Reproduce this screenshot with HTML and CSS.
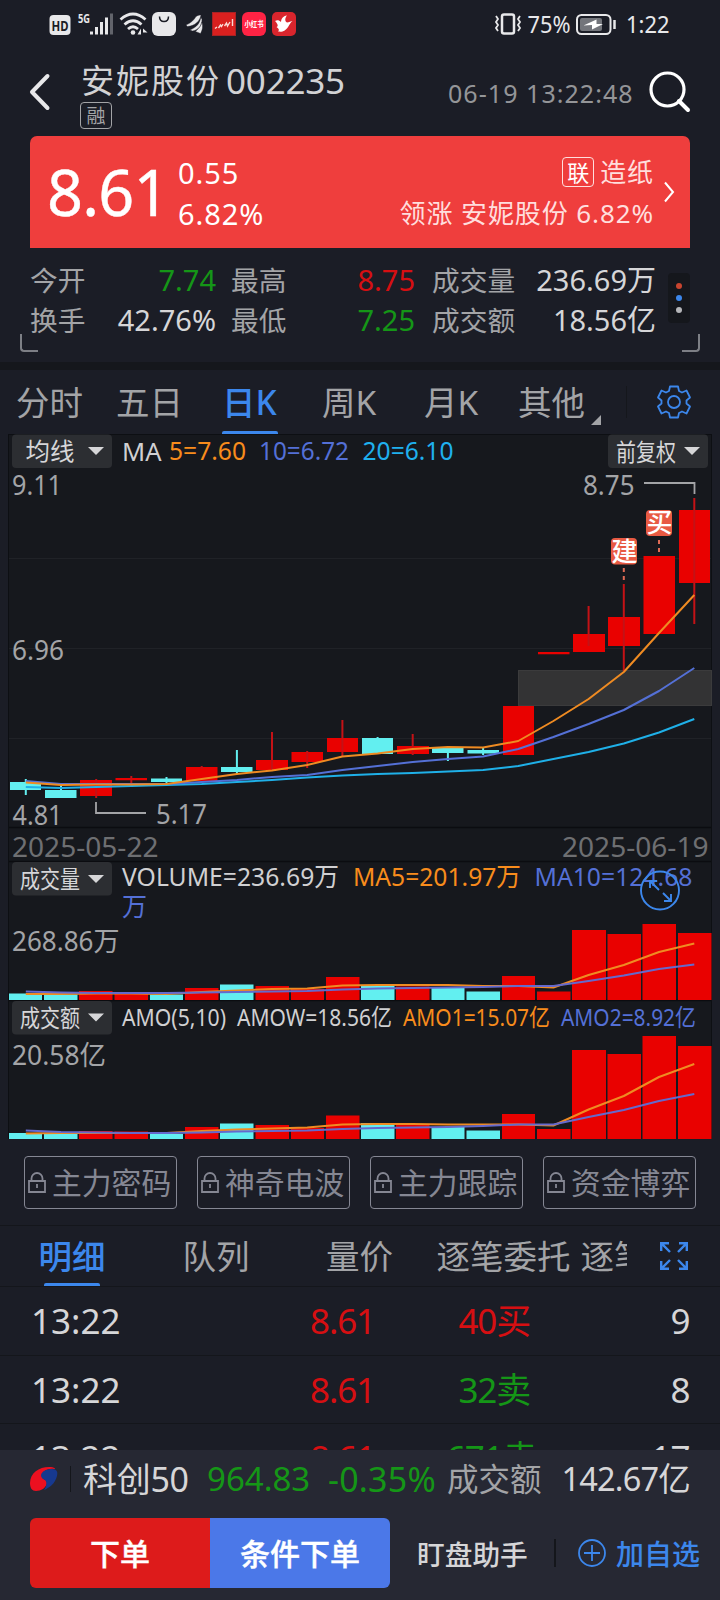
FILE: index.html
```html
<!DOCTYPE html>
<html lang="zh-CN">
<head>
<meta charset="utf-8">
<title>安妮股份 002235</title>
<link rel="stylesheet" href="styles.css">
</head>
<body>
<div class="screen">
  <header class="status">
    <svg class="status-icons" width="250" height="28" viewBox="48 10 250 28">
      <rect x="49.500" y="15" width="21" height="20" rx="4" fill="#e8e8ea"/>
      <text x="51.500" y="30.500" font-size="14" font-weight="700" fill="#1b1d26" textLength="17" lengthAdjust="spacingAndGlyphs">HD</text>
      <text x="78" y="22.500" font-size="13" font-weight="700" fill="#e8e8ea" textLength="12" lengthAdjust="spacingAndGlyphs">5G</text>
      <path d="M91.500 31.500v3M96.500 27v7.500M101.500 22v12.500M106.500 17.500v17" stroke="#e8e8ea" stroke-width="3"/>
      <path d="M111.500 13.500v21" stroke="#62646b" stroke-width="3"/>
      <g fill="none" stroke="#e8e8ea" stroke-width="2.800">
        <path d="M120.500 19.500q12.500-11 25 0M124.500 24.500q8.500-7.500 17 0M128 29q5-4.500 10 0"/>
      </g>
      <circle cx="133" cy="32.500" r="2.300" fill="#e8e8ea"/>
      <path d="M141 28.500v6h-3.500zM143 28.500l4.500 4h-4.500z" fill="#e8e8ea"/>
      <rect x="152" y="12" width="24" height="24" rx="6" fill="#e8e8ea"/>
      <path d="M159.500 16.500q0 5 4.500 5t4.500-5" fill="none" stroke="#1b1d26" stroke-width="1.500"/>
      <path d="M186 25C191 23 194 20 196 16.500 198 15 200 15 201 15 200 21 195 26 187.500 26.500ZM190 30C197 27 200 23 200.800 17L202 19.500C202 25 199 30 192.500 31ZM195.500 31.500C199 28 201 26 201.800 22 203.500 27 202 31 200.500 33.500Z" fill="#e8e8ea" stroke="#1b1d26" stroke-width=".4"/>
      <rect x="212.500" y="12.500" width="23" height="23" fill="#d9201f" stroke="#a82224"/>
      <path d="M215 28.500l2-1.500M218.500 28l2-3 1 1.500 1.500-2.500M224.500 26l2-3 1 3 2.500-4M232.500 19v7" fill="none" stroke="#fbd9d5" stroke-width="1.400"/>
      <rect x="242" y="12" width="24" height="24" rx="6" fill="#fe2344"/>
      <text x="244.500" y="27" font-size="7.500" font-weight="700" fill="#fff" textLength="19" lengthAdjust="spacingAndGlyphs">小红书</text>
      <rect x="272" y="12" width="24" height="24" rx="5" fill="#d9252d"/>
      <path d="M275 21C277 20 279 20 281 22 281 19 283 16 287 15.500 284.500 18.500 285 21.500 287 22.500 289 22.500 291 21 292.500 21 289 23.500 288 30 282.500 31.500 280 32 279 31.500 278 31.500 279.500 30 279 28.500 276.500 27 278.500 26.500 278 24 275 21Z" fill="#fff"/>
    </svg>
    <svg class="status-right" width="180" height="28" viewBox="490 10 180 28">
      <rect x="502" y="14.500" width="12" height="19" rx="2" fill="none" stroke="#e8e8ea" stroke-width="2.500"/>
      <path d="M496 16l2 3-2 3 2 3-2 3 2 3M520 16l-2 3 2 3-2 3 2 3-2 3" fill="none" stroke="#e8e8ea" stroke-width="1.800"/>
      <text x="527.500" y="33" font-size="23" fill="#e8e8ea" textLength="43" lengthAdjust="spacingAndGlyphs">75%</text>
      <rect x="577" y="15" width="33.500" height="19" rx="4.500" fill="none" stroke="#e8e8ea" stroke-width="2"/>
      <rect x="580" y="18" width="22" height="13" rx="2" fill="#73757b"/>
      <path d="M583.500 25.500l13-6v4.500h6.500l-11 5.500v-4.500z" fill="#fff"/>
      <path d="M614.500 20v9" stroke="#e8e8ea" stroke-width="2.500"/>
      <text x="626" y="33" font-size="23" fill="#e8e8ea" textLength="43.500" lengthAdjust="spacingAndGlyphs">1:22</text>
    </svg>
  </header>

  <section class="title-bar">
    <svg class="back" width="22" height="38" viewBox="0 0 22 38"><path d="M18.500 3L3 19l15.500 16" fill="none" stroke="#e8e8ea" stroke-width="4" stroke-linecap="round" stroke-linejoin="round"/></svg>
    <div class="title-block">
      <div class="title"><span class="stock-name">安妮股份</span><span class="stock-code">002235</span></div>
      <span class="tag">融</span>
    </div>
    <span class="time">06-19 13:22:48</span>
    <svg class="search" width="42" height="42" viewBox="0 0 42 42" fill="none" stroke="#fff"><circle cx="18.500" cy="18.500" r="16.500" stroke-width="3.200"/><path d="M30 30l9 9" stroke-width="4" stroke-linecap="round"/></svg>
  </section>

  <section class="price-card">
    <span class="price">8.61</span>
    <div class="change"><span>0.55</span><span>6.82%</span></div>
    <div class="sector">
      <div class="sector-name"><span class="link-tag">联</span><span>造纸</span></div>
      <div>领涨 安妮股份 6.82%</div>
    </div>
    <svg width="12" height="22" viewBox="0 0 12 22"><path d="M2 1.500L10 11 2 20.500" fill="none" stroke="#fff" stroke-width="2"/></svg>
  </section>

  <section class="quote">
    <div class="quote-grid">
      <span class="k">今开</span><span class="v down">7.74</span><span class="k">最高</span><span class="v up">8.75</span><span class="k">成交量</span><span class="v">236.69万</span>
      <span class="k">换手</span><span class="v">42.76%</span><span class="k">最低</span><span class="v down">7.25</span><span class="k">成交额</span><span class="v">18.56亿</span>
    </div>
    <div class="more"><i class="dot red"></i><i class="dot blue"></i><i class="dot gray"></i></div>
    <i class="corner left"></i><i class="corner right"></i>
  </section>

  <nav class="periods">
    <span class="p1">分时</span><span class="p2">五日</span><span class="p3 active">日K</span><span class="p4">周K</span><span class="p5">月K</span><span class="p6 more-periods">其他</span>
    <svg class="gear" width="36" height="36" viewBox="-18 -18 36 36" fill="none" stroke="#3c87ec" stroke-width="1.800" stroke-linejoin="round">
      <path d="M-4-15.500H4L5-11 8-9.500 12.500-11.500 16-4.500 12.500-1.500V1.500L16 4.500 12.500 11.500 8 9.500 5 11 4 15.500H-4L-5 11-8 9.500-12.500 11.500-16 4.500-12.500 1.500V-1.500L-16-4.500-12.500-11.500-8-9.500-5-11Z"/><circle r="6"/>
    </svg>
  </nav>

  <svg class="chart" width="720" height="705" viewBox="0 434 720 705">
    <rect x="8.500" y="434.500" width="703" height="705" fill="#16181d" stroke="#0d0f13"/>
    <path d="M9 558.500H711M9 648.500H711M9 738.500H711" stroke="#202227"/>
    <path d="M9 827.500H711M9 861.500H711M9 1000.500H711" stroke="#0b0c10" stroke-width="1.500"/>
    <rect x="518.500" y="670.500" width="193" height="35" fill="#333334" stroke="#3b3b3c"/>

    <!-- chips -->
    <g fill="#2c2e32"><rect x="12" y="434.500" width="100" height="33.500" rx="4"/><rect x="608" y="434.500" width="100" height="33.500" rx="4"/><rect x="12" y="862" width="100" height="33.500" rx="4"/><rect x="12" y="1001" width="100" height="33.500" rx="4"/></g>
    <path d="M88 447h16l-8 8zM684 447h16l-8 8zM88 875h16l-8 8zM88 1013.500h16l-8 8z" fill="#d6d6d8"/>
    <g class="cn" font-size="24" fill="#d6d6d8">
      <text x="25.500" y="460" textLength="49" lengthAdjust="spacingAndGlyphs">均线</text>
      <text x="616" y="461" textLength="60" lengthAdjust="spacingAndGlyphs">前复权</text>
      <text x="20" y="888" textLength="60" lengthAdjust="spacingAndGlyphs">成交量</text>
      <text x="20" y="1027" textLength="60" lengthAdjust="spacingAndGlyphs">成交额</text>
    </g>

    <!-- legends -->
    <g font-size="26">
      <text x="122" y="460.500" fill="#d0d0d2" textLength="39.500" lengthAdjust="spacingAndGlyphs">MA</text>
      <text x="169" y="460" fill="#f88c1c" textLength="77" lengthAdjust="spacingAndGlyphs">5=7.60</text>
      <text x="259" y="460" fill="#5470d6" textLength="90" lengthAdjust="spacingAndGlyphs">10=6.72</text>
      <text x="362.500" y="460" fill="#1fb0ee" textLength="91" lengthAdjust="spacingAndGlyphs">20=6.10</text>
      <text x="122" y="886" fill="#d0d0d2" textLength="217" lengthAdjust="spacingAndGlyphs">VOLUME=236.69万</text>
      <text x="353" y="886" fill="#f88c1c" textLength="168" lengthAdjust="spacingAndGlyphs">MA5=201.97万</text>
      <text x="534.500" y="886" fill="#5470d6" textLength="158" lengthAdjust="spacingAndGlyphs">MA10=124.68</text>
      <text x="122" y="915.500" fill="#5470d6" textLength="25" lengthAdjust="spacingAndGlyphs">万</text>
    </g>
    <g font-size="23.500">
      <text x="122" y="1026" fill="#d0d0d2" textLength="104" lengthAdjust="spacingAndGlyphs">AMO(5,10)</text>
      <text x="237" y="1026" fill="#d0d0d2" textLength="155" lengthAdjust="spacingAndGlyphs">AMOW=18.56亿</text>
      <text x="403" y="1026" fill="#f88c1c" textLength="147" lengthAdjust="spacingAndGlyphs">AMO1=15.07亿</text>
      <text x="561" y="1026" fill="#5470d6" textLength="135" lengthAdjust="spacingAndGlyphs">AMO2=8.92亿</text>
    </g>

    <!-- axis labels -->
    <g font-size="27" fill="#a3a4a7">
      <text x="12" y="494.500" textLength="50" lengthAdjust="spacingAndGlyphs">9.11</text>
      <text x="583" y="494.500" textLength="51.500" lengthAdjust="spacingAndGlyphs">8.75</text>
      <text x="12" y="660" textLength="52" lengthAdjust="spacingAndGlyphs">6.96</text>
      <text x="12.500" y="824.500" textLength="50" lengthAdjust="spacingAndGlyphs">4.81</text>
      <text x="156" y="824" textLength="51" lengthAdjust="spacingAndGlyphs">5.17</text>
      <text x="12" y="951" textLength="107.500" lengthAdjust="spacingAndGlyphs">268.86万</text>
      <text x="12" y="1065" textLength="94" lengthAdjust="spacingAndGlyphs">20.58亿</text>
      <g fill="#6e6f72"><text x="12" y="857" textLength="146.500" lengthAdjust="spacingAndGlyphs">2025-05-22</text>
      <text x="562" y="857" textLength="146.500" lengthAdjust="spacingAndGlyphs">2025-06-19</text></g>
    </g>
    <path d="M644 483H694.500V494M96 802V813H146" fill="none" stroke="#a3a4a7" stroke-width="1.800"/>

    <!-- candles -->
    <path d="M10 782h31v8h-31zM45 790h31.500v8h-31.500zM151 778.500h31v3.500h-31zM221 767h31.500v5h-31.500zM362 738h31v16h-31zM432 748h31.500v5h-31.500zM467.500 750h31.500v3.500h-31.500z" fill="#62eff0"/>
    <path d="M25.800 779v16M61 785v6M166.500 777v6M236.900 750v24M377.600 737v2M447.900 746v15M483.100 748v7" stroke="#62eff0" stroke-width="2"/>
    <path d="M80 780h32v16h-32zM115.500 778h31.500v2.300h-31.500zM186 767h31.500v14h-31.500zM256 760h32v10h-32zM291.500 752h31.500v10h-31.500zM327 738h31v14h-31zM397 746h32v8h-32zM503 706h31v49h-31zM538 652h31.500v2.200h-31.500zM573 634h32v18h-32zM608 617h32v29h-32zM643.500 556h31.500v78h-31.500zM679 510h31v73h-31z" fill="#e90100"/>
    <path d="M96.200 779v19M131.300 776v7M201.700 766v3M272 732v38M307.200 751v17M342.400 720v37M412.700 734v21M588.600 606v40M623.800 584v87M694.300 498v126" stroke="#c41216" stroke-width="2"/>
    <g fill="none" stroke-width="2" stroke-linejoin="round">
      <polyline stroke="#1fb0e8" points="25.800,787 61,788 96.200,787 131.300,786 166.500,785 201.700,784 236.900,782 272,780 307.200,777.500 342.400,775.500 377.600,774 412.700,773 447.900,771.500 483.100,770 518.300,766 553.400,759 588.600,752 623.800,743.500 659,732.500 694.300,719"/>
      <polyline stroke="#5470d6" points="25.800,781 61,784 96.200,784 131.300,784 166.500,784 201.700,782 236.900,780 272,777 307.200,775 342.400,770 377.600,766 412.700,762 447.900,759 483.100,756.500 518.300,749 553.400,737 588.600,724 623.800,710 659,691 694.300,668"/>
      <polyline stroke="#ef8b22" points="25.800,782.500 61,785 96.200,784.500 131.300,784.500 166.500,784 201.700,779 236.900,774 272,770.500 307.200,765 342.400,756.500 377.600,753.500 412.700,749 447.900,747 483.100,747.500 518.300,741 553.400,721 588.600,699 623.800,672 659,633 694.300,595"/>
    </g>
    <path d="M623.800 568v15M659 540v14" stroke="#df6b55" stroke-width="2" stroke-dasharray="4 4"/>
    <rect x="611" y="538" width="26" height="26.500" rx="4" fill="#e85a43"/><rect x="646" y="510" width="26" height="26" rx="4" fill="#e85a43"/>
    <g class="cn" font-size="26" font-weight="500" fill="#fff"><text x="611.500" y="561">建</text><text x="646.500" y="532">买</text></g>

    <!-- volume and amount -->
    <path d="M9 993.500h33v6.500h-33zM44 994.500h33.500v5.500h-33.500zM150 994.500h33v5.500h-33zM220 984.500h33.500v15.500h-33.500zM361 986h33.500v14h-33.500zM431.500 988h33v12h-33zM466.500 991.500h33.500v8.500h-33.500zM9 1133h33v6h-33zM44 1134h33.500v5h-33.500zM150 1134h33v5h-33zM220 1123.500h33.500v15.500h-33.500zM361 1123h33.500v16h-33.500zM431.500 1127h33v12h-33zM466.500 1130.500h33.500v8.500h-33.500z" fill="#62eff0"/>
    <path d="M79 991h33.500v9h-33.500zM114.500 992.500h33.500v7.500h-33.500zM185 988h33.500v12h-33.500zM255.500 986h33.500v14h-33.500zM291 989h33v11h-33zM326 977h33.500v23h-33.500zM396 986.500h33.500v13.500h-33.500zM502 976h33v24h-33zM537 991.500h33.500v8.500h-33.500zM572 930h34v70h-34zM607.500 934h33.500v66h-33.500zM642.500 924h33.500v76h-33.500zM678 933h33.500v67h-33.500zM79 1131h33.500v8h-33.500zM114.500 1131.500h33.500v7.500h-33.500zM185 1127h33.500v12h-33.500zM255.500 1125h33.500v14h-33.500zM291 1128h33v11h-33zM326 1115.500h33.500v23.500h-33.500zM396 1124.500h33.500v14.500h-33.500zM502 1114h33v25h-33zM537 1129h33.500v10h-33.500zM572 1050h34v89h-34zM607.500 1054h33.500v85h-33.500zM642.500 1036h33.500v103h-33.500zM678 1046h33.500v93h-33.500z" fill="#e90100"/>
    <g fill="none" stroke-width="2" stroke-linejoin="round">
      <g stroke="#ef8b22">
        <polyline points="25.800,994 61,994 96.200,993.500 131.300,993.500 166.500,994 201.700,992 236.900,990.500 272,989 307.200,988.500 342.400,985.500 377.600,985 412.700,985 447.900,985 483.100,986 518.300,986 553.400,987.500 588.600,975 623.800,965 659,952 694.300,943.500"/>
        <polyline points="25.800,1133.500 61,1133 96.200,1133 131.300,1133 166.500,1133 201.700,1131 236.900,1129.500 272,1128.500 307.200,1127.500 342.400,1124.500 377.600,1124 412.700,1124 447.900,1124.500 483.100,1124.500 518.300,1124.500 553.400,1125.500 588.600,1109.500 623.800,1096 659,1077 694.300,1064"/>
      </g>
      <g stroke="#6569cc">
        <polyline points="25.800,991.500 61,992.500 96.200,993 131.300,993 166.500,993 201.700,992.500 236.900,992 272,991.500 307.200,991 342.400,989.500 377.600,988.500 412.700,988 447.900,987.500 483.100,987 518.300,986 553.400,986 588.600,981 623.800,975.500 659,969 694.300,964.500"/>
        <polyline points="25.800,1130.500 61,1132 96.200,1132.500 131.300,1133 166.500,1133 201.700,1132.500 236.900,1131.500 272,1131 307.200,1130.500 342.400,1129 377.600,1128 412.700,1127.500 447.900,1127 483.100,1126 518.300,1124.500 553.400,1124.500 588.600,1117 623.800,1110 659,1101 694.300,1094"/>
      </g>
    </g>
    <g fill="none" stroke="#3c87ec" stroke-width="1.900"><circle cx="660" cy="890.500" r="19"/><path d="M650 888v-7h7M650 881l9 9M663 893l8 8M671 894v7h-7"/></g>
  </svg>

  <section class="features">
    <a class="feature"><svg width="18" height="22" viewBox="0 0 18 22"><path d="M3.500 10V6.500a5.500 5.500 0 0 1 11 0V10M1 9h16v11H1z"/><path d="M9 12v4"/></svg><span>主力密码</span></a>
    <a class="feature"><svg width="18" height="22" viewBox="0 0 18 22"><path d="M3.500 10V6.500a5.500 5.500 0 0 1 11 0V10M1 9h16v11H1z"/><path d="M9 12v4"/></svg><span>神奇电波</span></a>
    <a class="feature"><svg width="18" height="22" viewBox="0 0 18 22"><path d="M3.500 10V6.500a5.500 5.500 0 0 1 11 0V10M1 9h16v11H1z"/><path d="M9 12v4"/></svg><span>主力跟踪</span></a>
    <a class="feature"><svg width="18" height="22" viewBox="0 0 18 22"><path d="M3.500 10V6.500a5.500 5.500 0 0 1 11 0V10M1 9h16v11H1z"/><path d="M9 12v4"/></svg><span>资金博弈</span></a>
  </section>

  <nav class="detail-tabs">
    <div class="tab-strip"><span class="d1 active">明细</span><span class="d2">队列</span><span class="d3">量价</span><span class="d4">逐笔委托</span><span class="d5">逐笔</span></div>
    <svg class="expand" width="28" height="28" viewBox="0 0 28 28" fill="none" stroke="#3c87ec" stroke-width="2.400"><path d="M1.200 9V1.200H9M1.200 1.200L10 10M19 1.200h7.800V9M26.800 1.200L18 10M1.200 19v7.800H9M1.200 26.800L10 18M19 26.800h7.800V19M26.800 26.800L18 18"/></svg>
  </nav>

  <section class="trades">
    <div class="trade"><span class="t-time">13:22</span><span class="t-price up">8.61</span><span class="t-vol up">40买</span><span class="t-count">9</span></div>
    <div class="trade"><span class="t-time">13:22</span><span class="t-price up">8.61</span><span class="t-vol down">32卖</span><span class="t-count">8</span></div>
    <div class="trade"><span class="t-time">13:22</span><span class="t-price up">8.61</span><span class="t-vol down">671卖</span><span class="t-count">17</span></div>
  </section>

  <footer class="bottom">
    <div class="index-row">
      <svg width="28" height="26" viewBox="0 0 28 26"><path d="M0 17C0 7 9 1 19 1 25 1 26 3 24 3 17 2 11 6 12 11 13 14 17 13 17 17 16 22 11 25 6 25 2 25 0 22 0 17Z" fill="#ec1020"/><path d="M11 9C12 5 17 3 22 3 27 3 28 6 27 10 25 18 19 22 14 24 17 20 17 16 15 14 13 13 11 12 11 9Z" fill="#17398f"/></svg>
      <i class="rule"></i>
      <span class="ix-name">科创50</span><span class="ix-value down">964.83</span><span class="ix-pct down">-0.35%</span><span class="ix-label">成交额</span><span class="ix-amount">142.67亿</span>
    </div>
    <div class="actions">
      <a class="order">下单</a><a class="cond">条件下单</a><a class="helper">盯盘助手</a><i class="rule"></i>
      <a class="fav"><svg width="28" height="28" viewBox="0 0 28 28" fill="none" stroke="#3c87ec" stroke-width="1.800"><circle cx="14" cy="14" r="13"/><path d="M14 6v16M6 14h16"/></svg><span>加自选</span></a>
    </div>
  </footer>
</div>
</body>
</html>
```
FILE: styles.css
```css
* { box-sizing: border-box; }
body {
  margin: 0;
  background: #1b1d26;
  font-family: "Noto Sans", "Noto Sans CJK SC", sans-serif;
  color: #d6d6d8;
}
.screen {
  width: 720px;
  height: 1600px;
  display: flex;
  flex-direction: column;
  overflow: hidden;
  background: #1b1d26;
}
.screen svg { display: block; flex: none; }
span, a { white-space: nowrap; }
i { display: block; }
.cn { font-family: "Noto Sans CJK SC", sans-serif; }
.up { color: #d60f12; }
.v.down, .t-vol.down, .ix-value, .ix-pct { color: #159617; }

.status { height: 52px; padding: 10px 50px 0 48px; display: flex; justify-content: space-between; }

.title-bar { height: 84px; flex: none; display: flex; padding: 0 30px; }
.back { margin: 21px 0 0 -1px; }
.title-block { margin-left: 29px; width: 300px; }
.title { height: 50px; line-height: 57px; display: flex; gap: 5px; margin-left: 1px; color: #d2d2d4; }
.stock-name { font-size: 33px; letter-spacing: 2px; }
.stock-code { font-size: 35px; letter-spacing: -0.2px; }
.tag {
  display: block; width: 32px; height: 27px; border: 1px solid #a3a4a7; border-radius: 4px;
  font-size: 19px; line-height: 26px; text-align: center; color: #a3a4a7;
}
.time { margin-left: 68px; font-size: 25px; line-height: 83px; letter-spacing: 1.05px; color: #949598; }
.search { margin: 19px -1px 0 auto; }

.price-card {
  height: 112px; flex: none; margin: 0 30px; padding: 0 15px 0 17px;
  border-radius: 7px 7px 0 0; background: #ef3e3d; color: #fff; display: flex; align-items: center;
}
.price { font-size: 63px; line-height: 114px; letter-spacing: -0.8px; width: 131px; -webkit-text-stroke: 0.4px #fff; }
.change { display: grid; font-size: 29px; line-height: 41px; letter-spacing: 0.9px; padding-top: 2px; }
.sector { margin-left: auto; display: grid; justify-items: end; font-size: 26px; line-height: 41px; letter-spacing: 0.9px; color: #ffdedd; padding-top: 2px; }
.sector-name { display: flex; align-items: center; gap: 6px; }
.link-tag { width: 32px; height: 30px; margin-top: -2px; border: 1px solid #ffdedd; border-radius: 4px; font-size: 22px; line-height: 28px; text-align: center; letter-spacing: 0; color: #fff; }
.price-card svg { margin-left: 9px; }

.quote { height: 122px; flex: none; position: relative; padding: 12px 30px 0; display: flex; border-bottom: 8px solid #15171c; }
.quote-grid { display: grid; grid-template-columns: 80px 106px 16px 70px 113px 17px 100px 124px; grid-template-rows: 40px 40px; width: 626px; line-height: 40px; }
.quote-grid .k { font-size: 27.7px; color: #a3a4a7; }
.quote-grid .v { font-size: 29px; text-align: right; }
.quote-grid .k:nth-child(6n+3) { grid-column: 4; margin-left: -1px; }
.quote-grid .k:nth-child(6n+5) { grid-column: 7; }
.more { width: 22px; height: 50px; margin: 13px 0 0 12px; border-radius: 4px; background: #15171c; display: flex; flex-direction: column; align-items: center; justify-content: center; gap: 6px; }
.dot { width: 6px; height: 6px; border-radius: 50%; }
.red { background: #c8452f; } .blue { background: #3c87ec; } .gray { background: #b5b6b9; }
.corner { position: absolute; top: 86px; width: 18px; height: 18px; border-bottom: 2px solid #7d7f85; }
.corner.left { left: 20px; border-left: 2px solid #7d7f85; border-bottom-left-radius: 4px; }
.corner.right { right: 20px; border-right: 2px solid #7d7f85; border-bottom-right-radius: 4px; }

.periods {
  height: 64px; flex: none; display: grid; padding-left: 16px; font-size: 33.5px; line-height: 65px; color: #a3a4a7;
  grid-template-columns: 100px 106px 100px 102px 94px 109px 1fr; grid-template-rows: 64px;
}
.active { position: relative; color: #3c87ec; font-weight: 500; }
.active::after { content: ""; position: absolute; left: 50%; margin-left: -28px; bottom: 0; width: 56px; height: 3px; border-radius: 2px 2px 0 0; background: #3c87ec; }
.p3 { width: 56px; }
.more-periods { position: relative; border-right: 1px solid #15171c; height: 32px; margin-top: 16px; line-height: 33px; }
.more-periods::after { content: ""; position: absolute; left: 73px; top: 29px; border-left: 10px solid transparent; border-bottom: 10px solid #a3a4a7; }
.gear { margin: 14px 0 0 29px; }

.chart text { white-space: pre; }

.features { height: 87px; flex: none; padding: 17px 24px 0; display: flex; gap: 20px; border-bottom: 1px solid #14161b; }
.feature { width: 153px; height: 53px; border: 1px solid #858793; border-radius: 4px; display: flex; align-items: center; padding-left: 3px; gap: 6px; font-size: 29.8px; line-height: 52px; color: #858793; }
.feature svg { fill: none; stroke: #858793; stroke-width: 1.8; }

.detail-tabs { height: 61px; flex: none; display: flex; border-bottom: 1px solid #14161b; }
.tab-strip { width: 627px; height: 60px; overflow: hidden; display: grid; grid-template-columns: 144px 143.5px 110.5px 144px 60px; grid-template-rows: 60px; padding-left: 38.5px; font-size: 33.5px; line-height: 60px; color: #a3a4a7; }
.d1 { width: 67px; }
.expand { margin: 16px 0 0 33px; }

.trades { height: 163px; flex: none; overflow: hidden; }
.trade { height: 68.5px; display: grid; grid-template-columns: 280px 136px 144px 100px; padding: 0 30px; border-bottom: 1px solid #14161b; font-size: 35px; line-height: 68px; letter-spacing: -0.5px; }
.t-time { margin-left: 1px; letter-spacing: 0; }
.t-price { letter-spacing: -1.1px; }
.t-vol { width: 84px; text-align: right; letter-spacing: -1.2px; }
.t-count { text-align: right; }

.bottom { flex: 1; background: #262833; padding: 0 30px; }
.index-row { height: 68px; display: grid; align-items: center; grid-template-columns: 40px 13px 124px 121px 119px 100px 1fr; line-height: 58px; padding-bottom: 10px; }
.rule { width: 1px; height: 26px; background: #14161b; }
.ix-name { font-size: 34px; letter-spacing: -0.3px; }
.ix-value { font-size: 33px; }
.ix-pct { font-size: 34px; letter-spacing: 0.2px; }
.ix-label { font-size: 31.5px; color: #a3a4a7; }
.ix-amount { font-size: 32.5px; text-align: right; letter-spacing: -0.8px; }
.actions { display: flex; align-items: center; height: 70px; font-weight: 500; }
.order, .cond { width: 180px; flex: none; height: 70px; line-height: 71px; font-size: 30px; text-align: center; color: #fff; -webkit-text-stroke: 0.4px #fff; }
.order { background: #dd1b1b; border-radius: 6px 0 0 6px; }
.cond { background: #4b78e8; border-radius: 0 6px 6px 0; }
.helper { margin-left: 27px; font-size: 27.7px; width: 137px; flex: none; }
.actions .rule { height: 28px; width: 2px; flex: none; }
.fav { display: flex; flex: none; align-items: center; gap: 10px; margin-left: 22px; font-size: 28px; color: #3c87ec; }
```
